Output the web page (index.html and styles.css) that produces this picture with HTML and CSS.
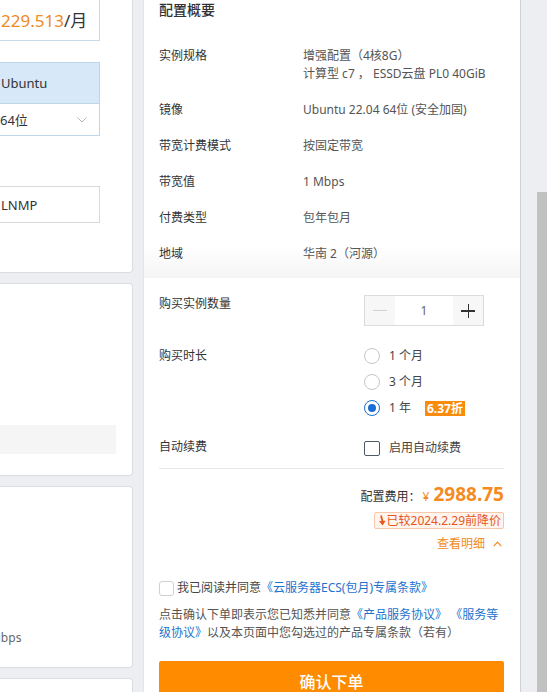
FILE: index.html
```html
<!DOCTYPE html>
<html lang="zh-CN">
<head>
    <meta charset="UTF-8">
    <meta name="viewport" content="width=device-width, initial-scale=1.0">
    <title>云服务器 ECS - 确认订单</title>
    <link rel="stylesheet" href="styles.css">
</head>
<body>
    <div class="page">
        <aside class="side">
            <div class="card card-spec">
                <div class="price-box"><span class="price-num">229.513</span>/月</div>
                <div class="image-box">
                    <div class="image-os">Ubuntu</div>
                    <div class="image-ver">
                        <span>64位</span>
                        <svg class="chev" width="10" height="6" viewBox="0 0 10 6"><path d="M0.5 0.5 L5 5 L9.5 0.5" fill="none" stroke="#b5b5b5" stroke-width="1"/></svg>
                    </div>
                </div>
                <div class="app-box">LNMP</div>
            </div>
            <div class="card card-mid">
                <div class="gray-row"></div>
            </div>
            <div class="card card-bw">
                <div class="bw-text">1 Mbps</div>
            </div>
            <div class="card card-last"></div>
        </aside>

        <main class="panel">
            <section class="summary">
                <h2 class="summary-title">配置概要</h2>
                <dl class="summary-list">
                    <dt>实例规格</dt>
                    <dd>增强配置（4核8G）<br>计算型 c7 ， ESSD云盘 PL0 40GiB</dd>
                    <dt>镜像</dt>
                    <dd>Ubuntu 22.04 64位 (安全加固)</dd>
                    <dt>带宽计费模式</dt>
                    <dd>按固定带宽</dd>
                    <dt>带宽值</dt>
                    <dd>1 Mbps</dd>
                    <dt>付费类型</dt>
                    <dd>包年包月</dd>
                    <dt>地域</dt>
                    <dd>华南 2（河源）</dd>
                </dl>
            </section>

            <section class="order">
                <div class="form-row row-count">
                    <div class="form-label">购买实例数量</div>
                    <div class="stepper">
                        <span class="step-btn minus"><i></i></span>
                        <span class="step-val">1</span>
                        <span class="step-btn plus"><i></i><i class="v"></i></span>
                    </div>
                </div>

                <div class="form-row row-period">
                    <div class="form-label">购买时长</div>
                    <div class="radio-group">
                        <label class="radio"><span class="dot"></span>1 个月</label>
                        <label class="radio"><span class="dot"></span>3 个月</label>
                        <label class="radio checked"><span class="dot"></span>1 年<span class="discount">6.37折</span></label>
                    </div>
                </div>

                <div class="form-row row-renew">
                    <div class="form-label">自动续费</div>
                    <label class="check"><span class="box"></span>启用自动续费</label>
                </div>

                <div class="price">
                    <div class="price-line">配置费用：<span class="yen">¥</span><span class="amount">2988.75</span></div>
                    <div class="price-tag">
                        <svg width="8" height="11" viewBox="0 0 8 11"><path d="M3.2 0.5 C3.2 3.5 4.6 5 4.6 7" fill="none" stroke="#e8561b" stroke-width="1.8"/><path d="M1 6 L4.6 10.5 L7.6 5.8 Z" fill="#e8561b"/></svg>已较2024.2.29前降价
                    </div>
                    <div class="detail">查看明细
                        <svg width="9" height="6" viewBox="0 0 9 6"><path d="M0.8 5.2 L4.5 1.2 L8.2 5.2" fill="none" stroke="#f08a24" stroke-width="1.2"/></svg>
                    </div>
                </div>

                <label class="agree"><span class="box"></span>我已阅读并同意<a href="#">《云服务器ECS(包月)专属条款》</a></label>
                <p class="terms">点击确认下单即表示您已知悉并同意<a href="#">《产品服务协议》</a> <a href="#">《服务等级协议》</a>以及本页面中您勾选过的产品专属条款（若有）</p>

                <button class="submit">确认下单</button>
            </section>
        </main>

        <div class="scroll"><div class="thumb"></div></div>
    </div>
</body>
</html>
```

FILE: styles.css
```css
* {
    margin: 0;
    padding: 0;
    box-sizing: border-box;
}

body {
    font-family: "Noto Sans", "Noto Sans CJK SC", sans-serif;
    font-size: 12px;
    color: #333;
    background: #eceef1;
    overflow: hidden;
    height: 692px;
}

.page {
    display: flex;
    align-items: flex-start;
    height: 692px;
}

/* left column, clipped */
.side {
    width: 133px;
    flex: none;
    margin-top: -12px;
    margin-right: 10px;
    display: flex;
    flex-direction: column;
    gap: 10px;
    overflow: hidden;
}

.card {
    background: #fff;
    border: 1px solid #d9dce1;
    border-left: none;
    border-radius: 0 4px 4px 0;
    padding-right: 32px;
}

.card-spec {
    padding-bottom: 49px;
}

.price-box {
    height: 52px;
    margin-left: -20px;
    padding: 0 0 9px 20px;
    border: 1px solid #c9dbe9;
    border-top: none;
    display: flex;
    align-items: flex-end;
    font-size: 17px;
    line-height: 20px;
    color: #333;
}

.price-num {
    color: #f08a24;
}

.image-box {
    margin-top: 21px;
    margin-left: -20px;
    border: 1px solid #bfd5e8;
}

.image-os {
    height: 41px;
    background: #d7e8f8;
    padding-left: 20px;
    display: flex;
    align-items: center;
    font-size: 13px;
    border-bottom: 1px solid #bfd5e8;
}

.image-ver {
    height: 31px;
    padding: 0 12px 0 19px;
    display: flex;
    align-items: center;
    justify-content: space-between;
    font-size: 13px;
}

.app-box {
    margin-top: 50px;
    margin-left: -20px;
    height: 37px;
    padding-left: 20px;
    border: 1px solid #d9d9d9;
    display: flex;
    align-items: center;
    font-size: 13px;
}

.card-mid {
    height: 193px;
    padding: 141px 16px 0 0;
}

.gray-row {
    height: 29px;
    background: #f5f5f5;
}

.card-bw {
    height: 182px;
    padding-top: 142px;
}

.bw-text {
    margin-left: -20px;
    font-size: 12px;
    line-height: 18px;
    color: #666;
}

.card-last {
    height: 60px;
}

/* order panel */
.panel {
    width: 378px;
    flex: none;
    background: #fff;
    border-left: 1px solid #e2e4e7;
    border-right: 1px solid #cfd2d6;
    padding: 0 16px 0 15px;
    height: 692px;
    overflow: hidden;
}

.summary {
    margin: 0 -16px 0 -15px;
    padding: 0 16px 15px 15px;
    background: linear-gradient(#fff 0, #fff 245px, #f5f5f6 278px);
    height: 278px;
}

.summary-title {
    font-size: 14px;
    font-weight: 500;
    line-height: 20px;
    color: #333;
}

.summary-list {
    margin-top: 27px;
    display: grid;
    grid-template-columns: 144px 1fr;
    row-gap: 18px;
    line-height: 18px;
}

.summary-list dt {
    color: #333;
}

.summary-list dd {
    color: #555;
}

.order {
    padding-top: 17px;
}

.form-row {
    display: grid;
    grid-template-columns: 205px 1fr;
    align-items: start;
    line-height: 18px;
}

.row-period {
    margin-top: 21px;
}

.row-renew {
    margin-top: 21px;
    padding-bottom: 11px;
    border-bottom: 1px solid #e6e6e6;
}

.stepper {
    width: 120px;
    height: 31px;
    border: 1px solid #dcdcdc;
    display: flex;
}

.step-btn {
    width: 30px;
    background: #f7f7f7;
    position: relative;
}

.step-btn i {
    position: absolute;
    left: 8px;
    top: 14px;
    width: 14px;
    height: 1.5px;
    background: #333;
}

.step-btn i.v {
    left: 14.5px;
    top: 7.5px;
    width: 1.5px;
    height: 14px;
}

.minus i {
    background: #d2d2d2;
    height: 1px;
}

.step-val {
    flex: 1;
    text-align: center;
    line-height: 29px;
    color: #666;
}

.radio-group {
    display: flex;
    flex-direction: column;
    gap: 8px;
}

.radio {
    display: flex;
    align-items: center;
    color: #444;
}

.radio .dot {
    width: 16px;
    height: 16px;
    border: 1px solid #c6c6c6;
    border-radius: 50%;
    margin-right: 9px;
    position: relative;
}

.radio.checked .dot {
    border-color: #1b6fd2;
}

.radio.checked .dot::after {
    content: "";
    position: absolute;
    left: 3px;
    top: 3px;
    width: 8px;
    height: 8px;
    border-radius: 50%;
    background: #1b6fd2;
}

.discount {
    margin-left: 14px;
    background: #f98c0c;
    color: #fff;
    font-weight: 700;
    font-size: 12px;
    line-height: 15px;
    padding: 0 2px;
}

.check {
    display: flex;
    align-items: center;
    color: #444;
    margin-top: 1px;
}

.check .box {
    width: 16px;
    height: 15px;
    border: 1px solid #4f5b6b;
    border-radius: 2px;
    margin-right: 9px;
}

.price {
    display: flex;
    flex-direction: column;
    align-items: flex-end;
    padding-top: 12px;
}

.price-line {
    line-height: 26px;
    display: flex;
    align-items: baseline;
    color: #333;
    font-size: 12px;
}

.yen {
    color: #f58a1f;
    margin: 0 4px 0 2px;
}

.amount {
    color: #f58a1f;
    font-size: 19px;
    font-weight: 700;
}

.price-tag {
    margin-top: 2px;
    height: 17px;
    padding: 0 2px 0 3px;
    border: 1px solid #f7c8a8;
    border-radius: 2px;
    background: #fff5ee;
    color: #e4571c;
    line-height: 15px;
    display: flex;
    align-items: center;
    gap: 1px;
}

.detail {
    margin-top: 6px;
    line-height: 18px;
    color: #f08a24;
    display: flex;
    align-items: center;
    gap: 8px;
    padding-right: 2px;
}

.agree {
    margin-top: 26px;
    display: flex;
    align-items: center;
    line-height: 18px;
    color: #444;
}

.agree .box {
    width: 15px;
    height: 15px;
    border: 1px solid #d0d0d0;
    border-radius: 3px;
    margin-right: 3px;
}

a {
    color: #1e72cc;
    text-decoration: none;
}

.terms {
    margin-top: 9px;
    line-height: 18px;
    color: #555;
}

.submit {
    display: block;
    width: 100%;
    height: 40px;
    margin-top: 19px;
    border: none;
    border-radius: 2px;
    background: #ff8b00;
    color: #fff;
    font-family: inherit;
    font-size: 16px;
    font-weight: 500;
}

/* page scrollbar */
.scroll {
    flex: 1;
    height: 692px;
    display: flex;
    justify-content: flex-end;
}

.thumb {
    width: 10px;
    margin-top: 192px;
    height: 500px;
    background: #c1c1c1;
}
```
